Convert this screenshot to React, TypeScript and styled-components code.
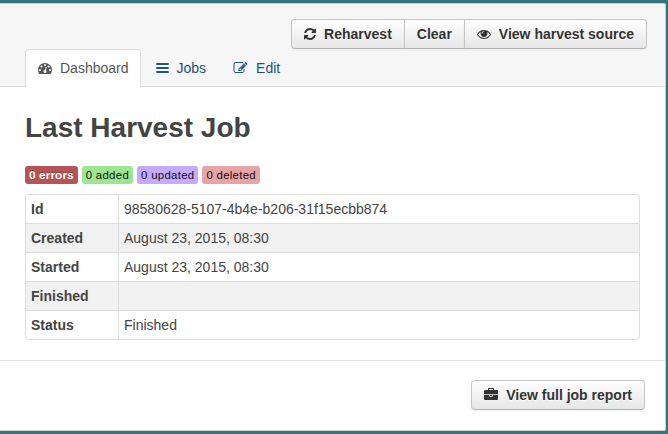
import React from 'react';
import styled, { createGlobalStyle, css } from 'styled-components';

const GlobalStyle = createGlobalStyle`
  *, *::before, *::after { box-sizing: border-box; }
  body {
    margin: 0;
    overflow: hidden;
    background: #35747d;
    color: #444;
    font: 14px/20px "Liberation Sans", Arial, sans-serif;
  }
`;

const Page = styled.div`
  height: 434px;
  padding: 3px 2px 3px 0;
`;

const Card = styled.main`
  display: flex;
  flex-direction: column;
  height: 428px;
  background: #fff;
  border: 1px solid #ccc;
  border-left: 0;
  border-radius: 0 2px 2px 0;
  overflow: hidden;
`;

const Header = styled.header`
  display: flex;
  flex-direction: column;
  justify-content: space-between;
  height: 83px;
  padding: 15px 18px 0 25px;
  background: #f6f6f6;
  border-bottom: 1px solid #ddd;
`;

const Actions = styled.div`
  display: flex;
  justify-content: flex-end;
  height: 30px;
  flex: none;
`;

const Button = styled.button`
  display: flex;
  align-items: center;
  gap: 8px;
  height: 30px;
  padding: 0 12px;
  border: 1px solid #c5c5c5;
  border-bottom-color: #b3b3b3;
  border-radius: 4px;
  background: linear-gradient(#fff, #e6e6e6);
  box-shadow: inset 0 1px 0 rgba(255, 255, 255, 0.2), 0 1px 2px rgba(0, 0, 0, 0.05);
  color: #333;
  font: bold 14px/20px "Liberation Sans", Arial, sans-serif;
  text-shadow: 0 1px 1px rgba(255, 255, 255, 0.75);
  white-space: nowrap;

  ${Actions} & { border-radius: 0; }
  ${Actions} & + & { margin-left: -1px; }
  ${Actions} &:first-child { border-radius: 4px 0 0 4px; }
  ${Actions} &:last-child { border-radius: 0 4px 4px 0; }
`;

const Tabs = styled.nav`
  display: flex;
  height: 38px;
  margin-bottom: -1px;
  flex: none;
`;

const Tab = styled.a<{ $active?: boolean }>`
  display: flex;
  align-items: center;
  gap: 8px;
  height: 38px;
  padding: 0 11px 2px 12px;
  margin-right: 2px;
  border: 1px solid transparent;
  border-bottom: 0;
  border-radius: 4px 4px 0 0;
  color: #23527c;
  ${({ $active }) =>
    $active &&
    css`
      color: #555;
      background: #fff;
      border-color: #ddd;
    `}
`;

const Glyph = styled.svg<{ $width?: number }>`
  display: block;
  flex: none;
  width: ${({ $width = 14 }) => $width}px;
  height: 14px;
  fill: currentColor;
`;

const Content = styled.section`
  height: 273px;
  padding: 25px 25px 0;
`;

const Title = styled.h1`
  margin: 0 0 22px;
  font-size: 28px;
  line-height: 32px;
  font-weight: bold;
`;

const Badges = styled.div`
  display: flex;
  gap: 4px;
  margin-bottom: 10px;
`;

const Badge = styled.span<{ $bg: string; $strong?: boolean }>`
  height: 18px;
  padding: 0 4px;
  border-radius: 3px;
  background: ${({ $bg }) => $bg};
  color: ${({ $strong }) => ($strong ? '#fff' : '#111')};
  font-size: ${({ $strong }) => ($strong ? '11.8px' : '11.4px')};
  letter-spacing: ${({ $strong }) => ($strong ? '0.1px' : '0.3px')};
  line-height: 18px;
  font-weight: ${({ $strong }) => ($strong ? 'bold' : 'normal')};
  text-shadow: ${({ $strong }) => ($strong ? '0 -1px 0 rgba(0, 0, 0, 0.25)' : 'none')};
`;

const Table = styled.table`
  width: 615px;
  border: 1px solid #ddd;
  border-radius: 4px;
  border-spacing: 0;
  table-layout: fixed;
  overflow: hidden;
`;

const Row = styled.tr`
  &:nth-child(even) { background: #f1f1f1; }
  & + & > * { border-top: 1px solid #ddd; }
  &:first-child > * { height: 28px; }
`;

const Label = styled.th`
  width: 92px;
  height: 29px;
  padding: 0 5px;
  text-align: left;
`;

const Value = styled.td`
  height: 29px;
  padding: 0 5px;
  border-left: 1px solid #ddd;
`;

const Footer = styled.footer`
  display: flex;
  justify-content: flex-end;
  align-items: flex-start;
  flex: 1;
  padding: 19px 20px 0;
  border-top: 1px solid #e3e3e3;
`;

const paths = {
  refresh:
    'M1511 928q0 5-1 7-64 268-268 434.5t-478 166.5q-146 0-282.5-55t-243.5-157l-129 129q-19 19-45 19t-45-19-19-45v-448q0-26 19-45t45-19h448q26 0 45 19t19 45-19 45l-137 137q71 66 161 102t187 36q134 0 250-65t186-179q11-17 53-117 8-23 30-23h192q13 0 22.5 9.5t9.5 22.5zm25-800v448q0 26-19 45t-45 19h-448q-26 0-45-19t-19-45 19-45l138-138q-148-137-349-137-134 0-250 65t-186 179q-11 17-53 117-8 23-30 23h-199q-13 0-22.5-9.5t-9.5-22.5v-7q65-268 270-434.5t480-166.5q146 0 284 55.5t245 156.5l130-129q19-19 45-19t45 19 19 45z',
  eye:
    'M1664 960q-152-236-381-353 61 104 61 225 0 185-131.5 316.5t-316.5 131.5-316.5-131.5-131.5-316.5q0-121 61-225-229 117-381 353 133 205 333.5 326.5t434.5 121.5 434.5-121.5 333.5-326.5zm-720-384q0-20-14-34t-34-14q-125 0-214.5 89.5t-89.5 214.5q0 20 14 34t34 14 34-14 14-34q0-86 61-147t147-61q20 0 34-14t14-34zm848 384q0 34-20 69-140 230-376.5 368.5t-499.5 138.5-499.5-139-376.5-368q-20-35-20-69t20-69q140-229 376.5-368t499.5-139 499.5 139 376.5 368q20 35 20 69z',
  gauge:
    'M384 1152q0-53-37.5-90.5t-90.5-37.5-90.5 37.5-37.5 90.5 37.5 90.5 90.5 37.5 90.5-37.5 37.5-90.5zm192-448q0-53-37.5-90.5t-90.5-37.5-90.5 37.5-37.5 90.5 37.5 90.5 90.5 37.5 90.5-37.5 37.5-90.5zm428 481l101-382q6-26-7.5-48.5t-38.5-29.5-48 6.5-30 39.5l-101 382q-60 5-107 43.5t-63 98.5q-20 77 20 146t117 89 146-20 89-117q16-60-6-117t-72-91zm660-33q0-53-37.5-90.5t-90.5-37.5-90.5 37.5-37.5 90.5 37.5 90.5 90.5 37.5 90.5-37.5 37.5-90.5zm-640-640q0-53-37.5-90.5t-90.5-37.5-90.5 37.5-37.5 90.5 37.5 90.5 90.5 37.5 90.5-37.5 37.5-90.5zm448 192q0-53-37.5-90.5t-90.5-37.5-90.5 37.5-37.5 90.5 37.5 90.5 90.5 37.5 90.5-37.5 37.5-90.5zm320 448q0 261-141 483-19 29-54 29h-1402q-35 0-54-29-141-221-141-483 0-182 71-348t191-286 286-191 348-71 348 71 286 191 191 286 71 348z',
  edit:
    'M888 1184l116-116-152-152-116 116v56h96v96h56zm440-720q-16-16-33 1l-350 350q-17 17-1 33t33-1l350-350q17-17 1-33zm80 594v190q0 119-84.5 203.5t-203.5 84.5h-832q-119 0-203.5-84.5t-84.5-203.5v-832q0-119 84.5-203.5t203.5-84.5h832q63 0 117 25 15 7 18 23 3 17-9 29l-49 49q-14 14-32 8-23-6-45-6h-832q-66 0-113 47t-47 113v832q0 66 47 113t113 47h832q66 0 113-47t47-113v-126q0-13 9-22l64-64q15-15 35-7t20 29zm-96-738l288 288-672 672h-288v-288zm444 132l-92 92-288-288 92-92q28-28 68-28t68 28l152 152q28 28 28 68t-28 68z',
  briefcase:
    'M640 256h512v-128h-512v128zm1152 640v480q0 66-47 113t-113 47h-1472q-66 0-113-47t-47-113v-480h672v160q0 26 19 45t45 19h320q26 0 45-19t19-45v-160h672zm-768 0v128h-256v-128h256zm768-480v384h-1792v-384q0-66 47-113t113-47h352v-160q0-40 28-68t68-28h576q40 0 68 28t28 68v160h352q66 0 113 47t47 113z',
};

const viewBoxes: Record<number, string> = {
  12: '0 -128 1536 1792',
  14: '0 0 1792 1792',
  15: '-64 0 1920 1792',
};

const Icon = ({ name, width = 14 }: { name: keyof typeof paths; width?: number }) => (
  <Glyph $width={width} viewBox={viewBoxes[width]} aria-hidden>
    <path d={paths[name]} />
  </Glyph>
);

const BarsIcon = () => (
  <Glyph $width={13} viewBox="0 0 13 14" aria-hidden>
    <path d="M0.3 2h12.4v2H0.3zM0.3 6h12.4v2H0.3zM0.3 10h12.4v2H0.3z" />
  </Glyph>
);

const rows = [
  ['Id', '98580628-5107-4b4e-b206-31f15ecbb874'],
  ['Created', 'August 23, 2015, 08:30'],
  ['Started', 'August 23, 2015, 08:30'],
  ['Finished', ''],
  ['Status', 'Finished'],
];

export default function App() {
  return (
    <Page>
      <GlobalStyle />
      <Card>
        <Header>
          <Actions>
            <Button><Icon name="refresh" width={12} />Reharvest</Button>
            <Button>Clear</Button>
            <Button><Icon name="eye" />View harvest source</Button>
          </Actions>
          <Tabs>
            <Tab $active><Icon name="gauge" />Dashboard</Tab>
            <Tab><BarsIcon />Jobs</Tab>
            <Tab><Icon name="edit" width={15} />Edit</Tab>
          </Tabs>
        </Header>
        <Content>
          <Title>Last Harvest Job</Title>
          <Badges>
            <Badge $bg="#b55457" $strong>0 errors</Badge>
            <Badge $bg="#9ee592">0 added</Badge>
            <Badge $bg="#c5aaff">0 updated</Badge>
            <Badge $bg="#e7a4a6">0 deleted</Badge>
          </Badges>
          <Table>
            <tbody>
              {rows.map(([label, value]) => (
                <Row key={label}>
                  <Label scope="row">{label}</Label>
                  <Value>{value}</Value>
                </Row>
              ))}
            </tbody>
          </Table>
        </Content>
        <Footer>
          <Button><Icon name="briefcase" />View full job report</Button>
        </Footer>
      </Card>
    </Page>
  );
}
